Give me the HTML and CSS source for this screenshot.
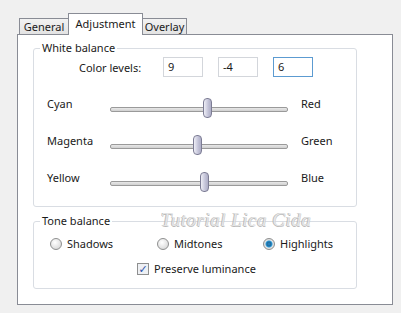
FILE: index.html
```html
<html>
<head>
<title>Adjustment</title>
<link rel="stylesheet" href="styles.css">
</head>
<body>
<div class="dialog">
  <div class="tabs">
    <div class="tab t-general">General</div>
    <div class="tab t-adjust active">Adjustment</div>
    <div class="tab t-overlay">Overlay</div>
  </div>
  <div class="panel">
    <div class="group wb">
      <div class="group-title">White balance</div>
      <div class="levels">
        <span class="levels-label">Color levels:</span>
        <div class="field">9</div>
        <div class="field">-4</div>
        <div class="field focus">6</div>
      </div>
      <div class="slider-row">
        <span class="lab">Cyan</span>
        <div class="track"><div class="thumb" style="left:92px"></div></div>
        <span class="lab right">Red</span>
      </div>
      <div class="slider-row">
        <span class="lab">Magenta</span>
        <div class="track"><div class="thumb" style="left:82px"></div></div>
        <span class="lab right">Green</span>
      </div>
      <div class="slider-row">
        <span class="lab">Yellow</span>
        <div class="track"><div class="thumb" style="left:89px"></div></div>
        <span class="lab right">Blue</span>
      </div>
    </div>

    <div class="group tone">
      <div class="group-title">Tone balance</div>
      <div class="radios">
        <label class="opt"><span class="radio"></span>Shadows</label>
        <label class="opt"><span class="radio"></span>Midtones</label>
        <label class="opt"><span class="radio on"></span>Highlights</label>
      </div>
      <label class="check-row"><span class="check">&#10003;</span>Preserve luminance</label>
    </div>

    <div class="mark">Tutorial Lica Cida</div>
  </div>
</div>
</body>
</html>
```

FILE: styles.css
```css
body { margin:0; background:#f0f0f0; color:#1a1a1a; font-family:"Noto Sans", "DejaVu Sans", sans-serif; font-size:11px; }

.dialog { padding:14px 0 0 17px; width:376px; }

/* tab strip */
.tabs { display:flex; align-items:flex-end; height:20px; padding-left:2px; font-size:11px; }
.tab { box-sizing:border-box; height:16px; line-height:16px; text-align:center; border:1px solid #898c95; border-bottom:none; background:linear-gradient(#f2f2f2, #e3e3e3); margin-right:-1px; }
.tab.active { height:22px; line-height:19px; background:#fff; position:relative; z-index:2; margin-bottom:-1px; }
.t-general { width:50px; }
.t-adjust { width:75px; }
.t-overlay { width:45px; }

.panel { position:relative; background:#fff; border:1px solid #898c95; height:269px; }

/* group boxes */
.group { position:relative; border:1px solid #d9dde3; border-radius:3px; margin-left:15px; width:322px; }
.group-title { position:absolute; top:-9px; left:6px; padding:0 2px; background:#fff; line-height:16px; }
.wb { margin-top:13px; height:157px; }
.tone { margin-top:14px; height:66px; }

.levels { display:flex; align-items:center; margin:8px 0 0 45px; }
.levels-label { width:84px; }
.field { width:34px; height:18px; line-height:18px; padding-left:4px; border:1px solid #d3d6db; margin-right:15px; }
.field.focus { border-color:#5c9bd1; }

.slider-row { display:grid; grid-template-columns:63px 178px auto; height:20px; margin:17px 0 0 13px; }
.levels + .slider-row { margin-top:22px; }
.lab { margin-top:-3px; }
.lab.right { padding-left:13px; }
.track { position:relative; height:3px; margin-top:8px; border:1px solid #9a9a9a; border-radius:2px; background:linear-gradient(#e8e8e8, #d0d0d0); }
.thumb { position:absolute; top:-10px; width:7px; height:18px; border:1px solid #7c7c94; border-radius:4px; background:linear-gradient(90deg, #eeeef6, #c3c3d8 60%, #aeaec6); }

/* tone balance */
.radios { display:grid; grid-template-columns:107px 106px auto; margin:14px 0 0 16px; }
.opt { display:flex; align-items:center; }
.radio { box-sizing:border-box; width:12px; height:12px; border:1px solid #8e8f8f; border-radius:50%; background:radial-gradient(circle at 40% 35%, #fff, #cfcfcf); margin-right:5px; }
.radio.on { background:radial-gradient(circle, #2a8ac9 0, #1f6a9d 2px, #2f9bd8 3px, #e8e8e8 4px, #cfcfcf 6px); }
.check-row { display:flex; align-items:center; margin:10px 0 0 103px; }
.check { width:10px; height:10px; border:1px solid #8e8f8f; background:#eef0f4; color:#2a4fa8; font-size:11px; line-height:10px; text-align:center; margin-right:5px; font-weight:bold; }

/* watermark over the panel */
.mark { position:absolute; left:143px; top:174px; font-family:"Liberation Serif", serif; font-style:italic; font-size:19px; color:#e2e2e2; letter-spacing:0.5px; text-shadow:-1px 0 0 #b0b0b0, 0 1px 0 #b0b0b0; opacity:0.85; }
```
